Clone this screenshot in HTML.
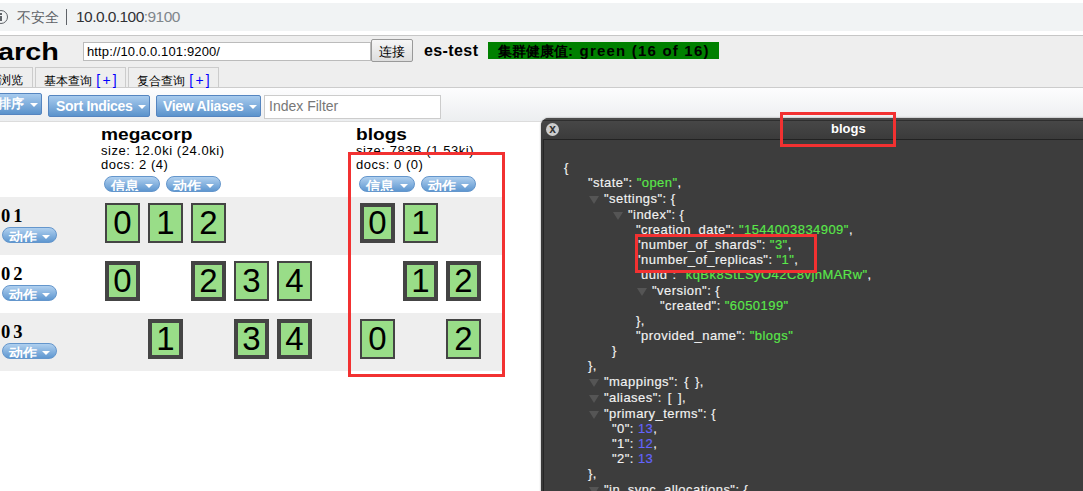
<!DOCTYPE html>
<html><head><meta charset="utf-8">
<style>
*{margin:0;padding:0;box-sizing:border-box}
html,body{width:1083px;height:491px;overflow:hidden;background:#fff;font-family:"Liberation Sans",sans-serif;position:relative}
.a{position:absolute;white-space:nowrap}
/* browser bar */
#bar{left:0;top:0;width:1083px;height:35px;background:#fff}
#pill{left:-20px;top:3px;width:1120px;height:28px;background:#f1f3f4;border-radius:14px}
#hdr{left:0;top:36px;width:1083px;height:51px;background:#eee}
#line1{left:0;top:35px;width:1083px;height:1px;background:#c6c6c6}
#tool{left:0;top:88px;width:1083px;height:33px;background:linear-gradient(#fdfdfe,#eceef0)}
#line2{left:0;top:87px;width:1083px;height:1px;background:#ccc}
#line3{left:0;top:121px;width:1083px;height:1px;background:#dcdcdc}
.btn{height:22px;border:1px solid #5585c0;border-radius:2px;background:linear-gradient(#a8cbee,#5b93cc);color:#fff;font-weight:bold;font-size:14px;line-height:20px;padding-left:7px;letter-spacing:-0.3px}
.btn .caret{top:9px;border-left-width:4px;border-right-width:4px;border-top-width:4px}
.caret{position:absolute;top:9px;width:0;height:0;border-left:5px solid transparent;border-right:5px solid transparent;border-top:5px solid #fff}
.pbtn{height:16px;border:1px solid #6496cc;border-radius:8px;background:linear-gradient(#b0d0ef,#5f97d0);color:#fff;font-weight:bold;font-size:13.5px;line-height:20px;overflow:hidden;padding-left:6px}
.pbtn .caret{top:7px;border-left-width:4px;border-right-width:4px;border-top-width:4px}
.row{left:0;width:502px;height:58px}
.sh{width:35px;height:40px;background:#99dd88;border:2px solid #444;font-size:33px;line-height:36px;text-align:center;color:#000}
.sh.p{border-width:4px;line-height:32px}
.node{font-family:"Liberation Serif",serif;font-weight:bold;font-size:18.5px;letter-spacing:3px}
/* json panel */
#panel{left:541px;top:118px;width:560px;height:400px;background:#3d3d3d;border-radius:8px 0 0 0;overflow:hidden;box-shadow:0 0 2px rgba(0,0,0,.45)}
#ptitle{left:0;top:0;width:560px;height:21px;background:linear-gradient(#4c4c4c 0,#4c4c4c 2px,#2e2e2e 2px,#2e2e2e 3px,#474747 3px,#3b3b3b 100%)}
#pbody{left:2px;top:21px;width:560px;height:400px;background:#3d3d3d;border-top:1px solid #222;border-left:1px solid #262626}
#pedge{left:0;top:21px;width:2px;height:400px;background:#3a3a3a}
.j{position:absolute;white-space:nowrap;font-size:13px;color:#f2f2f2;line-height:15px;letter-spacing:0.45px;-webkit-text-stroke:0.15px}
.s{color:#5ae84a}
.n{color:#6464ff;-webkit-text-stroke:0.15px #6464ff}
.t{display:inline-block;width:0;height:0;border-left:5px solid transparent;border-right:5px solid transparent;border-top:8px solid #555;margin-right:5px;vertical-align:-1px}
.red{position:absolute;border:3px solid #f23131}
</style></head><body>
<div class="a" id="bar"></div>
<div class="a" id="pill"></div>
<div class="a" id="line1"></div>
<div class="a" id="hdr"></div>
<div class="a" id="line2"></div>
<div class="a" id="tool"></div>
<div class="a" id="line3"></div>

<!-- browser url -->
<div class="a" style="left:-6px;top:10px;width:14px;height:14px;border:1.7px solid #5f6368;border-radius:50%"></div>
<div class="a" style="left:0px;top:13px;width:2px;height:2px;background:#5f6368"></div><div class="a" style="left:0px;top:16px;width:2px;height:5px;background:#5f6368"></div>
<div class="a" style="left:17px;top:9px;font-size:14px;color:#5f6368">不安全</div>
<div class="a" style="left:66px;top:9px;width:1px;height:16px;background:#5f6368"></div>
<div class="a" style="left:76px;top:8px;font-size:15.5px;letter-spacing:-0.55px;color:#303134">10.0.0.100<span style="color:#80868b">:9100</span></div>

<!-- header -->
<div class="a" style="left:-2px;top:38px;font-size:24px;font-weight:bold;color:#000;transform:scaleX(1.2);transform-origin:0 0">arch</div>
<div class="a" style="left:83px;top:42px;width:288px;height:19px;background:#fff;border:1px solid #bbb;font-size:13px;line-height:17px;padding-left:3px;letter-spacing:0.13px;color:#000">http://10.0.0.101:9200/</div>
<div class="a" style="left:371px;top:39px;width:42px;height:23px;background:linear-gradient(#f6f6f6,#dedede);border:1px solid #999;border-radius:2px;font-size:13px;line-height:23px;text-align:center">连接</div>
<div class="a" style="left:424px;top:42px;font-size:16px;font-weight:bold;letter-spacing:0.4px;color:#000">es-test</div>
<div class="a" style="left:488px;top:42px;width:231px;height:17px;background:#008000;font-size:15px;font-weight:bold;line-height:17px;padding-left:10px;color:#000"><span style="font-size:14px">集群健康值</span><span style="letter-spacing:1.2px">: green (16 of 16)</span></div>

<!-- tabs -->
<div class="a" style="left:-5px;top:67px;width:38px;height:20px;border:1px solid #ccc;border-bottom:none;font-size:12px;line-height:24px;padding-left:3px">浏览</div>
<div class="a" style="left:35px;top:67px;width:91px;height:20px;border:1px solid #ccc;border-bottom:none;font-size:12px;line-height:24px;padding-left:8px">基本查询 <span style="color:#00f;font-size:14px;letter-spacing:2.2px;margin-left:1px">[+]</span></div>
<div class="a" style="left:128px;top:67px;width:91px;height:20px;border:1px solid #ccc;border-bottom:none;font-size:12px;line-height:24px;padding-left:8px">复合查询 <span style="color:#00f;font-size:14px;letter-spacing:2.2px;margin-left:1px">[+]</span></div>

<!-- toolbar -->
<div class="a btn" style="left:-6px;top:93px;width:48px;height:22px;padding-left:3px;line-height:19px"><span style="font-size:13px">排序</span><span class="caret" style="left:35px;top:9px"></span></div>
<div class="a btn" style="left:48px;top:95px;width:102px;height:22px;line-height:20px">Sort Indices<span class="caret" style="left:89px"></span></div>
<div class="a btn" style="left:156px;top:95px;width:105px;height:22px;line-height:20px;padding-left:6px">View Aliases<span class="caret" style="left:92px"></span></div>
<div class="a" style="left:264px;top:95px;width:177px;height:24px;background:#fff;border:1px solid #ccc;font-size:14px;line-height:21px;padding-left:4px;color:#777">Index Filter</div>

<!-- indices header -->
<div class="a" style="left:101px;top:125px;font-size:17px;font-weight:bold;transform:scaleX(1.125);transform-origin:0 0">megacorp</div>
<div class="a" style="left:101px;top:143px;font-size:13px;letter-spacing:0.55px">size: 12.0ki (24.0ki)</div>
<div class="a" style="left:101px;top:157px;font-size:13px;letter-spacing:0.55px">docs: 2 (4)</div>
<div class="a pbtn" style="left:104px;top:176px;width:56px">信息<span class="caret" style="left:40px"></span></div>
<div class="a pbtn" style="left:166px;top:176px;width:55px">动作<span class="caret" style="left:39px"></span></div>

<div class="a" style="left:356px;top:125px;font-size:17px;font-weight:bold;transform:scaleX(1.125);transform-origin:0 0">blogs</div>
<div class="a" style="left:356px;top:143px;font-size:13px;letter-spacing:0.55px">size: 783B (1.53ki)</div>
<div class="a" style="left:356px;top:156px;font-size:13px;background:#fff;width:140px;height:0"></div>
<div class="a" style="left:356px;top:157px;font-size:13px;letter-spacing:0.55px">docs: 0 (0)</div>
<div class="a pbtn" style="left:359px;top:176px;width:56px">信息<span class="caret" style="left:40px"></span></div>
<div class="a pbtn" style="left:421px;top:176px;width:55px">动作<span class="caret" style="left:39px"></span></div>

<!-- rows -->
<div class="a row" style="top:197px;background:#eee"></div>
<div class="a row" style="top:255px;background:#fff"></div>
<div class="a row" style="top:313px;background:#eee"></div>

<div class="a node" style="left:1px;top:206px">01</div>
<div class="a pbtn" style="left:2px;top:227px;width:55px">动作<span class="caret" style="left:39px"></span></div>
<div class="a node" style="left:1px;top:264px">02</div>
<div class="a pbtn" style="left:2px;top:285px;width:55px">动作<span class="caret" style="left:39px"></span></div>
<div class="a node" style="left:1px;top:322px">03</div>
<div class="a pbtn" style="left:2px;top:343px;width:55px">动作<span class="caret" style="left:39px"></span></div>

<!-- shards row 01 -->
<div class="a sh" style="left:105px;top:203px">0</div>
<div class="a sh" style="left:148px;top:203px">1</div>
<div class="a sh" style="left:191px;top:203px">2</div>
<div class="a sh p" style="left:360px;top:203px">0</div>
<div class="a sh" style="left:403px;top:203px">1</div>
<!-- row 02 -->
<div class="a sh p" style="left:105px;top:261px">0</div>
<div class="a sh p" style="left:191px;top:261px">2</div>
<div class="a sh" style="left:234px;top:261px">3</div>
<div class="a sh" style="left:277px;top:261px">4</div>
<div class="a sh p" style="left:403px;top:261px">1</div>
<div class="a sh p" style="left:446px;top:261px">2</div>
<!-- row 03 -->
<div class="a sh p" style="left:148px;top:319px">1</div>
<div class="a sh p" style="left:234px;top:319px">3</div>
<div class="a sh p" style="left:277px;top:319px">4</div>
<div class="a sh" style="left:360px;top:319px">0</div>
<div class="a sh" style="left:446px;top:319px">2</div>

<div class="red" style="left:348px;top:152px;width:157px;height:225px"></div>

<!-- JSON panel -->
<div class="a" id="panel">
  <div class="a" id="ptitle"></div><div class="a" id="pedge"></div><div class="a" id="pbody"></div>
  <div class="a" style="left:5px;top:5px;width:13px;height:13px;border-radius:50%;background:#ccc;color:#333;font-size:12px;font-weight:bold;line-height:12px;text-align:center">x</div>
  <div class="a" style="left:290px;top:3px;font-size:13px;font-weight:bold;color:#fff">blogs</div>
</div>
<div id="json" class="a" style="left:0;top:0">
<div class="j" style="left:564px;top:160px">{</div>
<div class="j" style="left:588px;top:175px">"state": <span class="s">"open"</span>,</div>
<div class="j" style="left:589px;top:191px"><i class="t"></i>"settings": {</div>
<div class="j" style="left:613px;top:207px"><i class="t"></i>"index": {</div>
<div class="j" style="left:636px;top:222px">"creation_date": <span class="s">"1544003834909"</span>,</div>
<div class="j" style="left:636px;top:237px">"number_of_shards": <span class="s">"3"</span>,</div>
<div class="j" style="left:636px;top:252px">"number_of_replicas": <span class="s">"1"</span>,</div>
<div class="j" style="left:636px;top:267px">"uuid": <span class="s">"kqBk8StLSyO42C8vjnMARw"</span>,</div>
<div class="j" style="left:637px;top:283px"><i class="t"></i>"version": {</div>
<div class="j" style="left:660px;top:298px">"created": <span class="s">"6050199"</span></div>
<div class="j" style="left:636px;top:313px">},</div>
<div class="j" style="left:636px;top:328px">"provided_name": <span class="s">"blogs"</span></div>
<div class="j" style="left:612px;top:343px">}</div>
<div class="j" style="left:588px;top:358px">},</div>
<div class="j" style="left:589px;top:374px;word-spacing:2px"><i class="t"></i>"mappings": { },</div>
<div class="j" style="left:589px;top:390px;word-spacing:2px"><i class="t"></i>"aliases": [ ],</div>
<div class="j" style="left:589px;top:406px"><i class="t"></i>"primary_terms": {</div>
<div class="j" style="left:612px;top:421px">"0": <span class="n">13</span>,</div>
<div class="j" style="left:612px;top:436px">"1": <span class="n">12</span>,</div>
<div class="j" style="left:612px;top:451px">"2": <span class="n">13</span></div>
<div class="j" style="left:588px;top:466px">},</div>
<div class="j" style="left:589px;top:482px"><i class="t"></i>"in_sync_allocations": {</div>
</div>
<div class="red" style="left:780px;top:112px;width:116px;height:35px"></div>
<div class="red" style="left:635px;top:234px;width:182px;height:39px"></div>
</body></html>
